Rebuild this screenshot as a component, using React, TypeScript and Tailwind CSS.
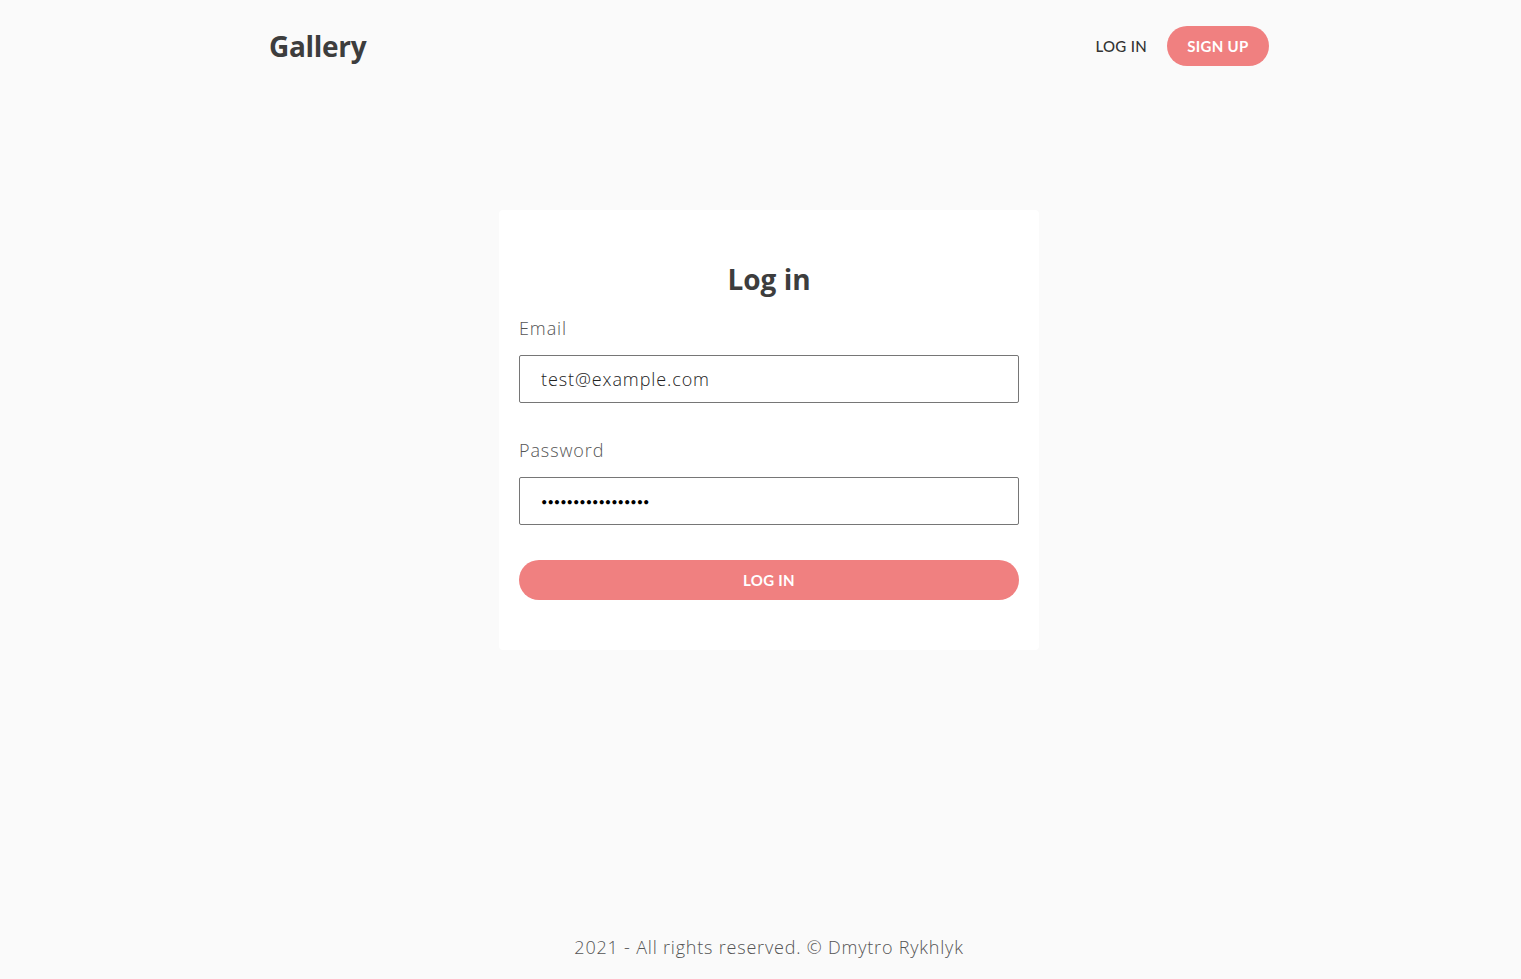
import React, { useState } from "react";

const body = { fontFamily: '"Open Sans", "Lato", sans-serif' };
const caps = { fontFamily: '"Lato", "Open Sans", sans-serif' };

export default function App() {
  const [email, setEmail] = useState("test@example.com");
  const [password, setPassword] = useState("passwordpassword1");

  return (
    <div
      className="min-h-screen bg-[#fafafa] flex flex-col text-[#444] pl-[17px]"
      style={body}
    >
      {/* Header */}
      <header className="w-[1000px] mx-auto h-[92px] flex items-center justify-between">
        <a href="#" className="text-[28px] font-bold text-[#3d3d3d] tracking-[-0.3px]">
          Gallery
        </a>
        <nav className="flex items-center gap-5" style={caps}>
          <a href="#" className="text-[15px] font-medium text-[#333] tracking-[0.3px]">
            LOG IN
          </a>
          <a
            href="#"
            className="h-10 w-[102px] rounded-full bg-[#f08080] text-white text-[15px] font-bold flex items-center justify-center tracking-[0.3px]"
          >
            SIGN UP
          </a>
        </nav>
      </header>

      {/* Main */}
      <main className="flex-1 flex justify-center">
        <form
          className="mt-[118px] mb-auto w-[540px] bg-white rounded-[4px] pt-[52px] px-5 pb-[50px]"
          onSubmit={(e) => e.preventDefault()}
        >
          <h1 className="text-center text-[28px] leading-[34px] font-bold text-[#3d3d3d]">
            Log in
          </h1>

          <label className="block mt-5 text-[18px] leading-6 font-light tracking-[0.9px] text-[#555]">
            Email
          </label>
          <input
            type="email"
            value={email}
            onChange={(e) => setEmail(e.target.value)}
            className="mt-[15px] w-full h-12 border border-[#767676] rounded-[2px] px-[21px] text-[18px] font-light tracking-[0.9px] text-[#222] outline-none"
          />

          <label className="block mt-[35px] text-[18px] leading-6 font-light tracking-[0.9px] text-[#555]">
            Password
          </label>
          <input
            type="password"
            value={password}
            onChange={(e) => setPassword(e.target.value)}
            className="mt-[15px] w-full h-12 border border-[#767676] rounded-[2px] px-[21px] text-[11px] text-black outline-none"
            style={caps}
          />

          <button
            type="submit"
            className="mt-[35px] w-full h-10 rounded-full bg-[#f08080] text-white text-[15px] font-bold tracking-[0.3px]"
            style={caps}
          >
            LOG IN
          </button>
        </form>
      </main>

      {/* Footer */}
      <footer className="h-16 flex items-center justify-center text-[18px] font-light tracking-[0.8px] text-[#555]">
        2021 - All rights reserved. © Dmytro Rykhlyk
      </footer>
    </div>
  );
}
